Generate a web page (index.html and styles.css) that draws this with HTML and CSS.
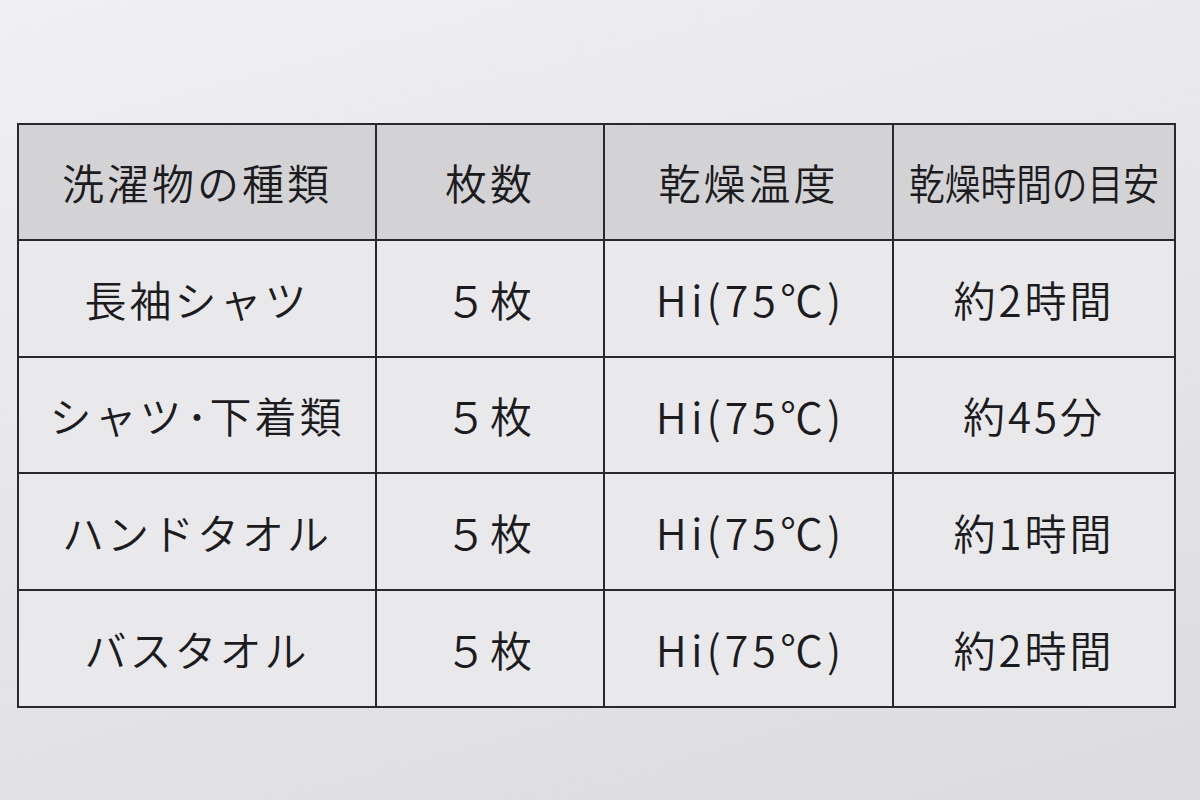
FILE: index.html
```html
<!DOCTYPE html>
<html lang="ja">
<head>
<meta charset="utf-8">
<link rel="stylesheet" href="styles.css">
</head>
<body>
<div class="page">
  <div class="table">
    <div class="cell head">洗濯物の種類</div>
    <div class="cell head">枚数</div>
    <div class="cell head">乾燥温度</div>
    <div class="cell head"><span class="condensed">乾燥時間の目安</span></div>

    <div class="cell">長袖シャツ</div>
    <div class="cell">５枚</div>
    <div class="cell latin">Hi(75℃)</div>
    <div class="cell">約2時間</div>

    <div class="cell">シャツ<span class="dot">･</span>下着類</div>
    <div class="cell">５枚</div>
    <div class="cell latin">Hi(75℃)</div>
    <div class="cell">約45分</div>

    <div class="cell">ハンドタオル</div>
    <div class="cell">５枚</div>
    <div class="cell latin">Hi(75℃)</div>
    <div class="cell">約1時間</div>

    <div class="cell">バスタオル</div>
    <div class="cell">５枚</div>
    <div class="cell latin">Hi(75℃)</div>
    <div class="cell">約2時間</div>
  </div>
</div>
</body>
</html>
```
FILE: styles.css
```css
html, body {
  margin: 0;
  padding: 0;
}
body {
  width: 1200px;
  height: 800px;
  overflow: hidden;
  background: linear-gradient(165deg, #f0f0f2 0%, #e8e8eb 40%, #dcdcdf 100%);
  font-family: "Noto Sans CJK JP", "Noto Sans", sans-serif;
  color: #1c1c1e;
}
.page {
  padding: 123px 0 0 17px;
}
.table {
  display: grid;
  grid-template-columns: 356px 226px 287px 280px;
  grid-template-rows: 114px 115px 114px 115px 115px;
  gap: 2px;
  padding: 2px;
  width: max-content;
  background: #29292b;
}
.cell {
  display: flex;
  align-items: center;
  justify-content: center;
  background: #e9e9ec;
  font-size: 42px;
  font-weight: 350;
  letter-spacing: 3px;
  line-height: 1;
  white-space: nowrap;
}
.cell.head {
  background: #d3d3d6;
}
.cell.latin {
  font-size: 43px;
  letter-spacing: 4px;
  padding-left: 4px;
}
.condensed {
  display: inline-block;
  letter-spacing: 0;
  transform: scaleX(0.85);
}
.dot {
  letter-spacing: 0;
  margin: 0 2px;
}
```
